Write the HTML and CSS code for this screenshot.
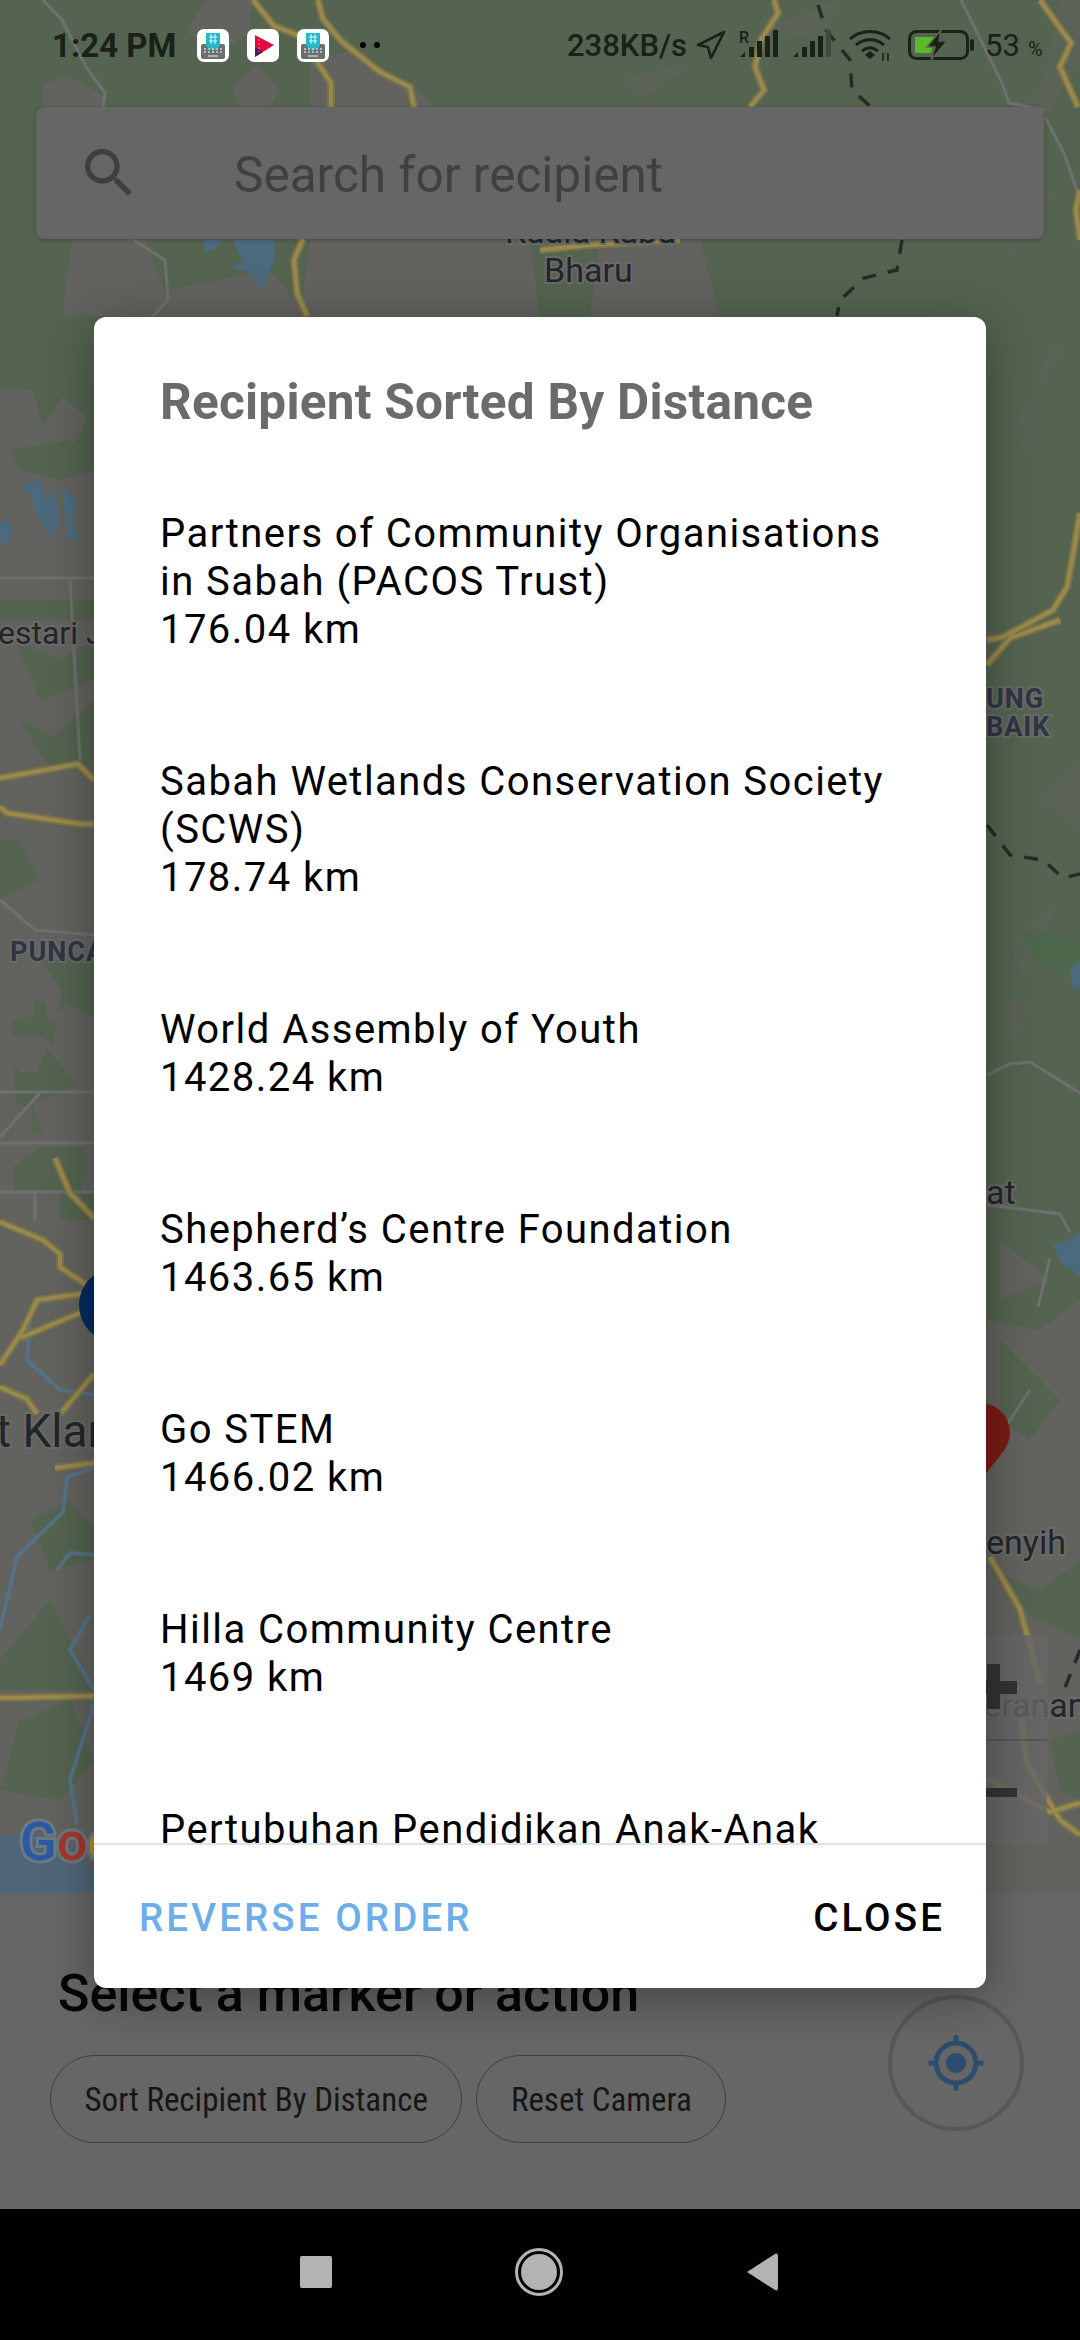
FILE: index.html
```html
<!DOCTYPE html>
<html lang="en">
<head>
    <meta charset="UTF-8">
    <meta name="viewport" content="width=device-width, initial-scale=1.0">
    <title>Recipient Sorted By Distance</title>
    <link rel="stylesheet" href="styles.css">
</head>
<body>
    <div class="screen">
        <div class="map">
            <svg class="map-art" viewBox="0 0 1080 1893" width="1080" height="1893">
                <defs>
                    <g id="roads">
                        <path d="M253 0L274 26 300 36 331 83V107"/>
                        <path d="M318 0L323 19 341 41 380 72 410 87 414 107"/>
                        <path d="M303 239L294 260 297 293 307 316"/>
                        <path d="M774 0L778 13 761 40 755 67 764 90 750 107"/>
                        <path d="M540 250L590 245 680 240"/>
                        <path d="M1040 0L1071 43 1060 67 1078 107"/>
                        <path d="M1080 190L1076 210 1080 240"/>
                        <path d="M1080 513L1075 543 1067 587 1053 610 1003 637 987 640"/>
                        <path d="M1060 620L1010 638 987 665"/>
                        <path d="M0 778L78 764 94 780"/>
                        <path d="M0 807L7 813 80 824H94"/>
                        <path d="M55 1158L70 1193 94 1218"/>
                        <path d="M0 1222L43 1240 60 1254V1267L94 1290"/>
                        <path d="M94 1292L37 1300 23 1330 0 1365"/>
                        <path d="M94 1307L20 1338"/>
                        <path d="M0 1387L27 1399 37 1414"/>
                        <path d="M94 1374L60 1414"/>
                        <path d="M55 1468L94 1463"/>
                        <path d="M0 1698L94 1696"/>
                        <path d="M990 1557L1020 1609 1040 1683"/>
                        <path d="M1020 1709L1027 1764 1060 1820 1080 1835"/>
                        <path d="M987 1779L1050 1812 1080 1803"/>
                    </g>
                </defs>
                <rect class="land-green" width="1080" height="1893"/>
                <rect class="land-grey" y="1200" width="94" height="693"/>
                <rect class="land-grey" y="960" width="94" height="260"/>
                <path class="land-grey" d="M186 30L207 0H253L248 35 222 50 196 40ZM233 85L259 65 279 90 269 107H238ZM43 85L67 75 103 95V107H43ZM310 60L357 50 388 80 414 85 434 107H310Z"/>
                <path class="land-grey" d="M72 240H145L165 290 269 270 310 316H62ZM310 240H530L540 316H300ZM600 240H700L720 316H590Z"/>
                <path class="land-grey" d="M0 387L33 390 43 427 63 396 87 418 73 450 94 470V600H0ZM0 620H94V700L50 740 94 770V960H0V900L40 880 20 840 0 840Z"/>
                <path class="land-faint" d="M1000 120L1040 90 1060 0 1080 0V60L1040 130ZM1040 200L1060 190 1000 270ZM760 30L840 0 820 40ZM620 80L700 60 640 100ZM1050 350L1070 340 1030 400ZM1010 430L1030 400V460ZM1040 800L1080 760V830ZM1000 1000H1030L1015 1050ZM1010 940L1060 900 1020 980Z"/>
                <path class="land-dark" d="M1020 935C1030 925 1060 935 1080 945V975C1050 975 1030 960 1020 935Z"/>
                <path class="land-grey" d="M987 1320L1040 1330 1080 1300V1893H987ZM1000 1240L1050 1280 1000 1300Z"/>
                <path class="land-green" d="M13 1063L20 1073 37 1072 47 1048 75 1083 60 1093 33 1102 43 1138 32 1133 33 1107 17 1105ZM12 1022L33 1015 35 1000 45 1002 47 1020 57 1023 53 1043 37 1035 13 1035ZM13 1190V1167L40 1147H83L87 1167 80 1190ZM60 1193H94V1220H60ZM40 960H94V1017L67 1003 57 1013 63 990Z"/>
                <path class="land-green" d="M30 1520L70 1500 94 1530V1560L50 1570ZM0 1660L50 1600 94 1690H0ZM20 1720L70 1700 94 1760 60 1800 0 1790ZM990 1570L1040 1590 1080 1560V1640L1020 1610ZM1050 1740L1080 1730V1800L1060 1790ZM1000 1340L1060 1400 1030 1440 1000 1420Z"/>
                <path class="land-green" d="M10 450L70 440 94 470 60 480 20 470ZM15 640L60 660 94 640V680L40 700ZM20 720L60 740 94 720V760L50 770Z"/>
                <path class="sea" d="M0 1838C30 1826 70 1838 94 1870V1893H0Z"/>
                <path class="lake" d="M204 240H222L215 250 204 252ZM233 240H274L275 258 263 290 250 272 230 268 243 260ZM23 485L40 480 47 500 55 490 60 520 50 540 35 510ZM62 490L78 500 72 520 80 540H68ZM0 525L10 520 12 540 0 545ZM1070 968L1080 960V990L1072 985ZM1053 1245L1068 1240 1080 1232V1276L1060 1262Z"/>
                <path class="river" d="M0 1629L17 1557 63 1512 67 1477 94 1468M57 1570L70 1553 94 1555M90 1615L70 1650 94 1690M94 1704L70 1780 77 1825M30 1320L27 1360 60 1390 94 1395"/>
                <path class="white-road" d="M43 0L62 20 86 67 105 93 103 107M134 240L165 260 168 300 153 316M961 0L1002 83 1009 103 1044 110M1045 117L1064 153 1080 200M0 578H94M70 580L80 760M0 900L35 930 94 935M0 1092H94M0 1143H94M0 1192H94M0 1137L40 1093M35 1192V1220M987 1075L1010 1064 1030 1062 1080 1093M987 1205L1060 1214 1070 1232M1050 1258L1038 1307M1030 1390L1010 1420 990 1450"/>
                <use href="#roads" class="road-case"/>
                <use href="#roads" class="road-fill"/>
                <path class="border-line" d="M818 5L826 30 850 60 852 90 871 107M902 240L897 270 864 278 840 300 837 316M987 825L1010 855 1043 860 1063 878 1080 874M1080 1650L1060 1700"/>

                <text class="place" x="505" y="243">Kuala Kubu</text>
                <text class="place" x="544" y="282">Bharu</text>
                <text class="place place-sm" x="-2" y="644">estari J</text>
                <text class="place-bold" x="10" y="961">PUNCA</text>
                <text class="place-bold" x="986" y="708">UNG</text>
                <text class="place-bold" x="986" y="736">BAIK</text>
                <text class="place" x="986" y="1204">at</text>
                <text class="place place-lg" x="-4" y="1447">t Klan</text>
                <text class="place" x="986" y="1554">enyih</text>
                <text class="place" x="963" y="1717">Seranan</text>

                <circle class="pin-blue" cx="117" cy="1305" r="38"/>
                <path class="pin-red" d="M980 1483C968 1462 950 1450 950 1433 950 1416 963 1403 980 1403 997 1403 1010 1416 1010 1433 1010 1450 992 1462 980 1483Z"/>

                <rect class="zoom-box" x="900" y="1635" width="147" height="210" rx="6"/>
                <path class="zoom-line" d="M900 1740H1047"/>
                <path class="zoom-sign" d="M987 1664H1000V1681H1017V1694H1000V1709H987V1694H960V1681H987ZM960 1788H1017V1797H960Z"/>

                <text class="google" x="20" y="1860"><tspan class="g-blue">G</tspan><tspan class="g-red">o</tspan><tspan class="g-yellow">o</tspan></text>
            </svg>

            <div class="status-bar">
                <span class="time">1:24 PM</span>
                <svg class="tray-icon" width="32" height="33" viewBox="0 0 32 33">
                    <rect width="32" height="33" rx="7" fill="#fff"/>
                    <rect x="4" y="15" width="24" height="15" rx="2" fill="#6b6f70"/>
                    <path d="M9 4H23V17L16 22 9 17Z" fill="#26b7c9"/>
                    <path d="M12 8H20M12 12H20M14 5V15M18 5V15" stroke="#dff" stroke-width="1"/>
                    <path d="M7 20H25M7 23H25" stroke="#cfd2d2" stroke-width="1.4" stroke-dasharray="2 2"/>
                    <path d="M11 27H21" stroke="#cfd2d2" stroke-width="1.4"/>
                </svg>
                <svg class="tray-icon" width="32" height="33" viewBox="0 0 32 33">
                    <rect width="32" height="33" rx="7" fill="#fff"/>
                    <path d="M8 6L27 16 8 28Z" fill="#e30a3f"/>
                    <path d="M8 18V28L16 23Z" fill="#4d1d55"/>
                    <path d="M12 10V23" stroke="#ff7a95" stroke-width="1" stroke-dasharray="2 2"/>
                </svg>
                <svg class="tray-icon" width="32" height="33" viewBox="0 0 32 33">
                    <rect width="32" height="33" rx="7" fill="#fff"/>
                    <rect x="4" y="15" width="24" height="15" rx="2" fill="#6b6f70"/>
                    <path d="M9 4H23V17L16 22 9 17Z" fill="#26b7c9"/>
                    <path d="M12 8H20M12 12H20M14 5V15M18 5V15" stroke="#dff" stroke-width="1"/>
                    <path d="M7 20H25M7 23H25" stroke="#cfd2d2" stroke-width="1.4" stroke-dasharray="2 2"/>
                    <path d="M11 27H21" stroke="#cfd2d2" stroke-width="1.4"/>
                </svg>
                <span class="more-dots"><i></i><i></i></span>
                <span class="speed">238KB/s</span>
                <svg class="loc-icon" width="30" height="30" viewBox="0 0 30 30">
                    <path d="M2 15L28 2 15 28 12 17Z" fill="none" stroke="#1a2119" stroke-width="2.6" stroke-linejoin="round"/>
                </svg>
                <svg class="sig-one" width="40" height="30" viewBox="0 0 40 30">
                    <text class="sig-r" x="0" y="13">R</text>
                    <path d="M1 27L6 22V27ZM10 27V17H15V27ZM18 27V11H23V27ZM26 27V6H31V27ZM34 27V0H39V27Z" fill="#1a2119"/>
                </svg>
                <svg class="sig-two" width="40" height="30" viewBox="0 0 40 30">
                    <path d="M0 27L5 22V27ZM9 27V17H14V27ZM17 27V11H22V27ZM25 27V6H30V27Z" fill="#1a2119"/>
                    <path d="M33 27V0H38V27Z" fill="#3d4a3f"/>
                </svg>
                <svg class="wifi-icon" width="44" height="32" viewBox="0 0 44 32">
                    <path d="M1 10C12 0 30 0 41 10M7 16C15 9 27 9 35 16M13 22C18 18 24 18 29 22" fill="none" stroke="#1a2119" stroke-width="3"/>
                    <path d="M16 26L21 22 26 26 21 30Z" fill="#1a2119"/>
                    <path d="M34 24V32M39 24V32" stroke="#1a2119" stroke-width="1.6"/>
                </svg>
                <svg class="batt-icon" width="66" height="30" viewBox="0 0 66 30">
                    <rect x="1.5" y="1.5" width="58" height="27" rx="7" fill="none" stroke="#1a2119" stroke-width="3"/>
                    <rect x="62" y="9" width="4" height="12" rx="2" fill="#1a2119"/>
                    <path d="M7 7H27L20 15H25L23 23H7Z" fill="#5ab92a"/>
                    <path d="M33 0L19 17H27L23 30 39 11H31Z" fill="#1a2119" stroke="#56664f" stroke-width="1.5"/>
                </svg>
                <span class="batt-num">53</span>
                <span class="batt-pct">%</span>
            </div>

            <div class="search-bar">
                <svg width="64" height="64" viewBox="0 0 24 24"><path fill="#3f3f3f" d="M15.5 14h-.79l-.28-.27C15.41 12.59 16 11.11 16 9.5 16 5.91 13.09 3 9.5 3S3 5.91 3 9.5 5.91 16 9.5 16c1.61 0 3.09-.59 4.23-1.57l.27.28v.79l5 4.99L20.49 19l-4.99-5zm-6 0C7.01 14 5 11.99 5 9.5S7.01 5 9.5 5 14 7.01 14 9.5 11.99 14 9.5 14z"/></svg>
                <span class="search-text">Search for recipient</span>
            </div>
        </div>

        <div class="panel">
            <div class="panel-left">
                <h2 class="panel-title">Select a marker or action</h2>
                <div class="chips">
                    <span class="chip"><span class="chip-text">Sort Recipient By Distance</span></span>
                    <span class="chip"><span class="chip-text">Reset Camera</span></span>
                </div>
            </div>
            <div class="gps-btn">
                <svg width="60" height="60" viewBox="0 0 24 24"><path fill="#2c4d6e" d="M12 8c-2.21 0-4 1.79-4 4s1.79 4 4 4 4-1.79 4-4-1.79-4-4-4zm8.94 3c-.46-4.17-3.77-7.48-7.94-7.94V1h-2v2.06C6.83 3.52 3.52 6.83 3.06 11H1v2h2.06c.46 4.17 3.77 7.48 7.94 7.94V23h2v-2.06c4.17-.46 7.48-3.77 7.94-7.94H23v-2h-2.06zM12 19c-3.87 0-7-3.13-7-7s3.13-7 7-7 7 3.13 7 7-3.13 7-7 7z"/></svg>
            </div>
        </div>

        <div class="nav-bar">
            <span class="nav-square"></span>
            <span class="nav-circle"></span>
            <svg width="32" height="38" viewBox="0 0 32 38"><path d="M1 19L29 1C31 0 32 1 32 3V35C32 37 31 38 29 37Z" fill="#b3b3b3"/></svg>
        </div>

        <div class="dialog">
            <h1 class="dialog-title">Recipient Sorted By Distance</h1>
            <div class="list">
                <div class="item">
                    <div>Partners of Community Organisations in Sabah (PACOS Trust)</div>
                    <div>176.04 km</div>
                </div>
                <div class="item">
                    <div>Sabah Wetlands Conservation Society (SCWS)</div>
                    <div>178.74 km</div>
                </div>
                <div class="item">
                    <div>World Assembly of Youth</div>
                    <div>1428.24 km</div>
                </div>
                <div class="item">
                    <div>Shepherd’s Centre Foundation</div>
                    <div>1463.65 km</div>
                </div>
                <div class="item">
                    <div>Go STEM</div>
                    <div>1466.02 km</div>
                </div>
                <div class="item">
                    <div>Hilla Community Centre</div>
                    <div>1469 km</div>
                </div>
                <div class="item">
                    <div>Pertubuhan Pendidikan Anak-Anak</div>
                </div>
            </div>
            <div class="actions">
                <span class="action action-blue">REVERSE ORDER</span>
                <span class="action">CLOSE</span>
            </div>
        </div>
    </div>
</body>
</html>
```

FILE: styles.css
```css
* {
    box-sizing: border-box;
    margin: 0;
    padding: 0;
}
body {
    width: 1080px;
    height: 2340px;
    overflow: hidden;
    background-color: #000;
    font-family: Roboto, "Noto Sans", sans-serif;
}
.screen {
    position: relative;
    display: flex;
    flex-direction: column;
    width: 1080px;
    height: 2340px;
    overflow: hidden;
}

/* map */
.map {
    position: relative;
    flex: none;
    height: 1893px;
    background-color: #546450;
}
.map-art {
    display: block;
}
.land-green { fill: #546450; }
.land-grey { fill: #62625e; }
.land-faint { fill: #5a6356; }
.land-dark { fill: #4e664b; }
.sea { fill: #4f6678; }
.lake { fill: #4c6a7e; }
.river { fill: none; stroke: #567286; stroke-width: 4; }
.white-road { fill: none; stroke: #6f7070; stroke-width: 3; }
.road-case { fill: none; stroke: #7a7348; stroke-width: 8; stroke-linejoin: round; }
.road-fill { fill: none; stroke: #98894f; stroke-width: 4; stroke-linejoin: round; }
.border-line { fill: none; stroke: #262b27; stroke-width: 3.5; stroke-dasharray: 14 12; }
.place {
    font-size: 34px;
    fill: #22252a;
    stroke: #6a6a68;
    stroke-width: 4px;
    paint-order: stroke;
}
.place-sm { font-size: 32px; }
.place-lg { font-size: 46px; }
.place-bold {
    font-size: 27px;
    font-weight: 700;
    letter-spacing: 1px;
    fill: #2e3645;
    stroke: #6a6a68;
    stroke-width: 4px;
    paint-order: stroke;
}
.pin-blue { fill: #062c5c; }
.pin-red { fill: #7a1c14; }
.zoom-box { fill: #666; opacity: 0.8; }
.zoom-line { stroke: #555; stroke-width: 2; }
.zoom-sign { fill: #333; }
.google {
    font-size: 54px;
    font-weight: 500;
    stroke: #6d7a82;
    stroke-width: 6px;
    paint-order: stroke;
}
.g-blue { fill: #2a5aa5; }
.g-red { fill: #a3372c; }
.g-yellow { fill: #b58f1e; }

/* status bar */
.status-bar {
    position: absolute;
    top: 28px;
    left: 52px;
    right: 30px;
    height: 34px;
    display: flex;
    align-items: center;
    color: #1a2119;
}
.time {
    width: 145px;
    font-size: 33px;
    font-weight: 700;
    white-space: nowrap;
}
.tray-icon {
    flex: none;
    margin-right: 18px;
}
.more-dots {
    flex: none;
    display: flex;
    gap: 8px;
    margin-left: 13px;
    width: 207px;
}
.more-dots i {
    width: 6px;
    height: 6px;
    border-radius: 50%;
    background-color: #000;
}
.speed {
    flex: none;
    width: 129px;
    font-size: 31px;
    font-weight: 500;
    white-space: nowrap;
}
.loc-icon { flex: none; margin-right: 13px; }
.sig-one { flex: none; margin-right: 14px; }
.sig-two { flex: none; margin-right: 16px; }
.sig-r { font-size: 16px; font-weight: 500; fill: #1a2119; }
.wifi-icon { flex: none; margin-right: 15px; }
.batt-icon { flex: none; margin-right: 11px; }
.batt-num { flex: none; font-size: 31px; width: 43px; }
.batt-pct { flex: none; font-size: 20px; margin-top: 8px; }

/* search */
.search-bar {
    position: absolute;
    top: 107px;
    left: 36px;
    width: 1008px;
    height: 132px;
    display: flex;
    align-items: center;
    padding-left: 41px;
    gap: 93px;
    background-color: #666;
    border-radius: 8px;
    box-shadow: 0 1px 4px rgba(0,0,0,0.25);
}
.search-text {
    padding-top: 4px;
    font-size: 49.5px;
    color: #404040;
}

/* bottom panel */
.panel {
    flex: 1;
    display: flex;
    justify-content: space-between;
    padding: 70px 56px 0 50px;
    background-color: #666;
}
.panel-title {
    margin-left: 8px;
    font-size: 52px;
    font-weight: 500;
    color: #050505;
}
.chips {
    display: flex;
    gap: 14px;
    margin-top: 31px;
}
.chip {
    display: flex;
    align-items: center;
    justify-content: center;
    height: 88px;
    padding: 0 33.5px;
    border: 1.5px solid #3f3f3f;
    border-radius: 44px;
}
.chip-text {
    font-size: 33px;
    font-stretch: 75%;
    color: #161616;
}
.gps-btn {
    display: flex;
    align-items: center;
    justify-content: center;
    width: 136px;
    height: 136px;
    margin-top: 32px;
    border: 4px solid #575757;
    border-radius: 50%;
}

/* nav */
.nav-bar {
    flex: none;
    height: 131px;
    display: flex;
    align-items: center;
    justify-content: center;
    gap: 183px;
    padding: 0 2px 5px 0;
    background-color: #000;
}
.nav-square {
    width: 32px;
    height: 32px;
    border-radius: 2px;
    background-color: #b3b3b3;
}
.nav-circle {
    width: 48px;
    height: 48px;
    padding: 3px;
    border: 3px solid #b3b3b3;
    border-radius: 50%;
    background-color: #b3b3b3;
    background-clip: content-box;
}

/* dialog */
.dialog {
    position: absolute;
    top: 317px;
    left: 94px;
    width: 892px;
    height: 1671px;
    display: flex;
    flex-direction: column;
    background-color: #fff;
    border-radius: 12px;
    box-shadow: 0 8px 50px rgba(0,0,0,0.35);
}
.dialog-title {
    flex: none;
    margin: 56px 0 0 66px;
    font-size: 49.5px;
    font-weight: 700;
    letter-spacing: 0.25px;
    color: #6b6b6b;
}
.list {
    flex: 1;
    overflow: hidden;
    padding: 27px 90px 0 66px;
    font-size: 40px;
    line-height: 48px;
    letter-spacing: 1.45px;
    color: #000;
}
.item {
    padding: 52px 0 52px 0;
}
.actions {
    flex: none;
    height: 145px;
    display: flex;
    align-items: center;
    justify-content: space-between;
    padding: 2px 41px 0 45px;
    border-top: 2px solid #e2e2e2;
}
.action {
    font-size: 38.5px;
    font-weight: 500;
    letter-spacing: 3.1px;
    color: #000;
}
.action-blue {
    color: #6cafe8;
}
```
